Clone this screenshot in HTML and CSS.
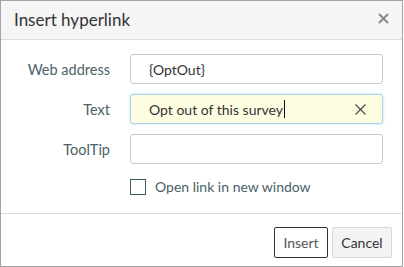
FILE: index.html
```html
<!DOCTYPE html>
<html lang="en">
<head>
    <meta charset="UTF-8">
    <meta name="viewport" content="width=device-width, initial-scale=1.0">
    <title>Insert hyperlink</title>
    <link rel="stylesheet" href="styles.css">
</head>
<body>
    <div class="dialog">
        <div class="dialog-header">
            <span class="dialog-title">Insert hyperlink</span>
            <svg class="dialog-close" width="11" height="11" viewBox="0 0 11 11">
                <path d="M1 1 L10 10 M10 1 L1 10" stroke="#8a8a8a" stroke-width="2"/>
            </svg>
        </div>

        <!-- Link fields -->
        <div class="dialog-body">
            <label class="field-label" for="link-url">Web address</label>
            <div class="field"><input type="text" id="link-url" value="{OptOut}"></div>

            <label class="field-label" for="link-text">Text</label>
            <div class="field field-focus">
                <span class="field-value">Opt out of this survey<span class="caret"></span></span>
                <svg class="field-clear" width="11" height="11" viewBox="0 0 11 11">
                    <path d="M0.5 0.5 L10.5 10.5 M10.5 0.5 L0.5 10.5" stroke="#444" stroke-width="1.1"/>
                </svg>
            </div>

            <label class="field-label" for="link-tip">ToolTip</label>
            <div class="field"><input type="text" id="link-tip"></div>

            <div></div>
            <label class="check">
                <span class="check-box"></span>
                Open link in new window
            </label>
        </div>

        <div class="dialog-footer">
            <button class="btn btn-primary btn-insert">Insert</button>
            <button class="btn btn-cancel">Cancel</button>
        </div>
    </div>
</body>
</html>
```

FILE: styles.css
```css
body {
    font-family: Lato, "Open Sans", sans-serif;
    margin: 0;
    padding: 0;
    background-color: #ffffff;
}

.dialog {
    width: 401px;
    height: 265px;
    border: 1px solid #a3a3a3;
    background-color: #fff;
    display: flex;
    flex-direction: column;
}

.dialog-header {
    height: 38px;
    display: flex;
    align-items: center;
    justify-content: space-between;
    padding: 0 13px 0 13px;
    background-color: #f5f5f5;
    border-bottom: 1px solid #dcdcdc;
}

.dialog-title {
    font-size: 17px;
    color: #333;
    margin-top: -1px;
}

.dialog-close {
    margin-top: -3px;
}

.dialog-body {
    display: grid;
    grid-template-columns: 109px 253px;
    column-gap: 20px;
    row-gap: 10px;
    align-items: center;
    align-content: start;
    padding: 14px 0 0 0;
    height: 174px;
    box-sizing: border-box;
    border-bottom: 1px solid #dcdcdc;
}

.field-label {
    text-align: right;
    font-size: 14.5px;
    color: #4a5f66;
}

.field {
    height: 30px;
    box-sizing: border-box;
    border: 1px solid #c9c9c9;
    border-radius: 3px;
    display: flex;
    align-items: center;
    background-color: #fff;
}

.field input {
    border: none;
    outline: none;
    background: transparent;
    width: 100%;
    padding: 0 0 0 18px;
    font-family: Lato, "Open Sans", sans-serif;
    font-size: 14px;
    color: #333;
}

.field-focus {
    background-color: #fffde1;
    border-color: #a9d4ea;
    box-shadow: 0 0 3px #b8e0f2;
    justify-content: space-between;
    padding: 0 16px 0 18px;
}

.field-value {
    font-size: 14px;
    color: #333;
    display: flex;
    align-items: center;
}

.caret {
    display: inline-block;
    width: 1px;
    height: 18px;
    background-color: #111;
    margin-left: 1px;
}

.check {
    display: flex;
    align-items: center;
    gap: 9px;
    font-size: 14px;
    color: #4a5f66;
    margin-top: 4px;
}

.check-box {
    width: 14px;
    height: 14px;
    border: 1px solid #3f5a61;
}

.dialog-footer {
    display: flex;
    justify-content: flex-end;
    gap: 4px;
    padding: 13px 10px 0 0;
}

.btn {
    height: 31px;
    padding: 0;
    font-family: Lato, "Open Sans", sans-serif;
    font-size: 14px;
    color: #333;
    background-color: #f3f3f3;
    border: 1px solid #d6d6d6;
    border-radius: 2px;
}

.btn-insert {
    width: 54px;
}

.btn-cancel {
    width: 60px;
}

.btn-primary {
    background-color: #fff;
    border-color: #333;
    color: #555;
}
```
